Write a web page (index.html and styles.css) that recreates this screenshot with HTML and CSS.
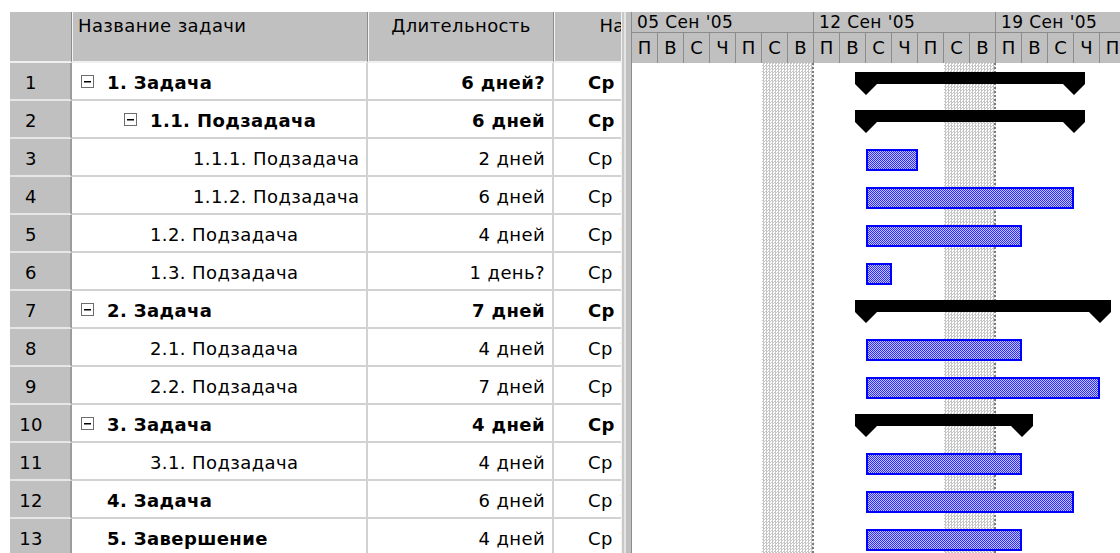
FILE: index.html
```html
<!DOCTYPE html>
<html lang="ru">
<head>
<meta charset="utf-8">
<title>Диаграмма Ганта</title>
<link rel="stylesheet" href="styles.css">
</head>
<body>
<div class="app">
  <div class="table-pane">
    <div class="thead">
      <div class="th num"></div>
      <div class="th name">Название задачи</div>
      <div class="th dur">Длительность</div>
      <div class="th start">Начало</div>
    </div>

    <div class="tr bold">
      <div class="td num">1</div>
      <div class="td name lvl0"><span class="toggle"></span>1. Задача</div>
      <div class="td dur">6 дней?</div>
      <div class="td start">Ср 14.09.05</div>
    </div>
    <div class="tr bold">
      <div class="td num">2</div>
      <div class="td name lvl1"><span class="toggle"></span>1.1. Подзадача</div>
      <div class="td dur">6 дней</div>
      <div class="td start">Ср 14.09.05</div>
    </div>
    <div class="tr">
      <div class="td num">3</div>
      <div class="td name lvl2">1.1.1. Подзадача</div>
      <div class="td dur">2 дней</div>
      <div class="td start">Ср 14.09.05</div>
    </div>
    <div class="tr">
      <div class="td num">4</div>
      <div class="td name lvl2">1.1.2. Подзадача</div>
      <div class="td dur">6 дней</div>
      <div class="td start">Ср 14.09.05</div>
    </div>
    <div class="tr">
      <div class="td num">5</div>
      <div class="td name lvl1">1.2. Подзадача</div>
      <div class="td dur">4 дней</div>
      <div class="td start">Ср 14.09.05</div>
    </div>
    <div class="tr">
      <div class="td num">6</div>
      <div class="td name lvl1">1.3. Подзадача</div>
      <div class="td dur">1 день?</div>
      <div class="td start">Ср 14.09.05</div>
    </div>
    <div class="tr bold">
      <div class="td num">7</div>
      <div class="td name lvl0"><span class="toggle"></span>2. Задача</div>
      <div class="td dur">7 дней</div>
      <div class="td start">Ср 14.09.05</div>
    </div>
    <div class="tr">
      <div class="td num">8</div>
      <div class="td name lvl1">2.1. Подзадача</div>
      <div class="td dur">4 дней</div>
      <div class="td start">Ср 14.09.05</div>
    </div>
    <div class="tr">
      <div class="td num">9</div>
      <div class="td name lvl1">2.2. Подзадача</div>
      <div class="td dur">7 дней</div>
      <div class="td start">Ср 14.09.05</div>
    </div>
    <div class="tr bold">
      <div class="td num">10</div>
      <div class="td name lvl0"><span class="toggle"></span>3. Задача</div>
      <div class="td dur">4 дней</div>
      <div class="td start">Ср 14.09.05</div>
    </div>
    <div class="tr">
      <div class="td num">11</div>
      <div class="td name lvl1">3.1. Подзадача</div>
      <div class="td dur">4 дней</div>
      <div class="td start">Ср 14.09.05</div>
    </div>
    <div class="tr">
      <div class="td num">12</div>
      <div class="td name lvl0 strong">4. Задача</div>
      <div class="td dur">6 дней</div>
      <div class="td start">Ср 14.09.05</div>
    </div>
    <div class="tr">
      <div class="td num">13</div>
      <div class="td name lvl0 strong">5. Завершение</div>
      <div class="td dur">4 дней</div>
      <div class="td start">Ср 14.09.05</div>
    </div>
  </div>

  <div class="splitter"></div>

  <div class="chart-pane">
    <div class="scale">
      <div class="weeks">
        <div class="week">05 Сен '05</div>
        <div class="week">12 Сен '05</div>
        <div class="week">19 Сен '05</div>
      </div>
      <div class="days">
        <div class="day">П</div><div class="day">В</div><div class="day">С</div><div class="day">Ч</div><div class="day">П</div><div class="day">С</div><div class="day">В</div>
        <div class="day">П</div><div class="day">В</div><div class="day">С</div><div class="day">Ч</div><div class="day">П</div><div class="day">С</div><div class="day">В</div>
        <div class="day">П</div><div class="day">В</div><div class="day">С</div><div class="day">Ч</div><div class="day">П</div><div class="day">С</div><div class="day">В</div>
      </div>
    </div>

    <div class="chart-body">
      <!-- weekends: Sat + Sun of the first two weeks -->
      <div class="nonwork wk1"></div>
      <div class="nonwork wk2"></div>

      <!-- day width 26px; all work starts Wed 14.09 (offset 234px) -->
      <div class="crow"><div class="summary" style="margin-left:223px;width:230px"></div></div>
      <div class="crow"><div class="summary" style="margin-left:223px;width:230px"></div></div>
      <div class="crow"><div class="task" style="margin-left:234px;width:52px"></div></div>
      <div class="crow"><div class="task" style="margin-left:234px;width:208px"></div></div>
      <div class="crow"><div class="task" style="margin-left:234px;width:156px"></div></div>
      <div class="crow"><div class="task" style="margin-left:234px;width:26px"></div></div>
      <div class="crow"><div class="summary" style="margin-left:223px;width:256px"></div></div>
      <div class="crow"><div class="task" style="margin-left:234px;width:156px"></div></div>
      <div class="crow"><div class="task" style="margin-left:234px;width:234px"></div></div>
      <div class="crow"><div class="summary" style="margin-left:223px;width:178px"></div></div>
      <div class="crow"><div class="task" style="margin-left:234px;width:156px"></div></div>
      <div class="crow"><div class="task" style="margin-left:234px;width:208px"></div></div>
      <div class="crow"><div class="task" style="margin-left:234px;width:156px"></div></div>
    </div>
  </div>
</div>
</body>
</html>
```

FILE: styles.css
```css
* {
  box-sizing: border-box;
}

html,
body {
  margin: 0;
  height: 100%;
}

body {
  background: #fff;
  color: #000;
  font-family: "DejaVu Sans", "Liberation Sans", sans-serif;
  font-size: 18px;
  letter-spacing: 0.4px;
  overflow: hidden;
}

.app {
  display: flex;
  height: 553px;
  padding: 12px 0 0 10px;
}

/* ---------- task table ---------- */

.table-pane {
  flex: none;
  width: 611px;
  overflow: hidden;
}

.thead,
.tr {
  display: flex;
  width: 720px;
}

.thead {
  height: 51px;
  background: #c0c0c0;
}

.th {
  flex: none;
  height: 51px;
  padding-top: 3px;
  border-left: 1px solid #f4f4f4;
  border-right: 1px solid #8c8c8c;
  border-bottom: 2px solid #f0f0f0;
  white-space: nowrap;
  overflow: hidden;
}

.th.num {
  border-left: none;
}

.th.name {
  padding-left: 5px;
}

.th.dur,
.th.start {
  text-align: center;
}

.num {
  width: 62px;
}

.name {
  width: 296px;
}

.dur {
  width: 186px;
}

/* date column is wider than the pane, so its tail is cut by the splitter */
.start {
  width: 162px;
}

.tr {
  height: 38px;
}

.td {
  flex: none;
  display: flex;
  align-items: center;
  height: 38px;
  padding-top: 3px;
  border-right: 2px solid #d2d2d2;
  border-bottom: 2px solid #d2d2d2;
  white-space: nowrap;
  overflow: hidden;
}

.td.num {
  justify-content: center;
  padding-right: 18px;
  background: #c0c0c0;
  border-bottom-color: #e6e6e6;
  border-right: 2px solid #9c9c9c;
}

.td.dur {
  justify-content: flex-end;
  padding-right: 7px;
}

.td.start {
  padding-left: 34px;
  border-right: none;
}

.tr.bold .name,
.tr.bold .dur,
.tr.bold .start,
.name.strong {
  font-weight: bold;
}

.lvl0 {
  padding-left: 35px;
}

.lvl1 {
  padding-left: 78px;
}

.lvl2 {
  padding-left: 121px;
}

.name .toggle {
  position: relative;
  flex: none;
  width: 13px;
  height: 13px;
  margin-left: -26px;
  margin-right: 13px;
  margin-top: -2px;
  border: 1px solid #6c6c6c;
  background: #fff;
}

.name .toggle::after {
  content: "";
  position: absolute;
  left: 2px;
  right: 2px;
  top: 5px;
  height: 1px;
  background: #000;
  box-shadow: 0 0.5px 0 #000;
}

/* ---------- splitter ---------- */

.splitter {
  flex: none;
  width: 11px;
  border-left: 1px solid #f2f2f2;
  border-right: 1px solid #8c8c8c;
  background: linear-gradient(90deg, #c8c8c8 0 2px, #e4e4e4 2px 4px, #c0c0c0 4px);
}

/* ---------- gantt chart ---------- */

.chart-pane {
  flex: 1;
  display: flex;
  flex-direction: column;
  overflow: hidden;
}

.scale {
  flex: none;
  background: #c0c0c0;
}

.weeks,
.days {
  display: flex;
}

.week {
  flex: none;
  width: 182px;
  height: 21px;
  padding-left: 5px;
  font-size: 17px;
  line-height: 21px;
  border-right: 1px solid #8c8c8c;
  border-bottom: 1px solid #8c8c8c;
  white-space: nowrap;
  overflow: hidden;
}

.day {
  flex: none;
  width: 26px;
  height: 30px;
  padding-top: 4px;
  text-align: center;
  letter-spacing: 0;
  border-right: 1px solid #8c8c8c;
}

.chart-body {
  position: relative;
  flex: 1;
}

.nonwork {
  position: absolute;
  top: 0;
  bottom: 0;
  width: 52px;
  background: repeating-conic-gradient(#c6c6c6 0 25%, #fff 0 50%) 0 0 / 3px 3px;
  border-right: 2px dotted #7a7a7a;
}

.nonwork.wk1 {
  left: 130px;
}

.nonwork.wk2 {
  left: 312px;
}

.crow {
  position: relative;
  z-index: 1;
  display: flex;
  align-items: flex-start;
  height: 38px;
}

.task {
  flex: none;
  margin-top: 10px;
  height: 22px;
  border: 2px solid #0000ff;
  background: repeating-conic-gradient(#2a2aff 0 25%, #c4c4ff 0 50%) 0 0 / 2px 2px;
}

.summary {
  flex: none;
  margin-top: 9px;
  height: 23px;
  background: #000;
  clip-path: polygon(0 0, 100% 0, 100% 12px, calc(100% - 11px) 23px, calc(100% - 22px) 12px, 22px 12px, 11px 23px, 0 12px);
}
```
